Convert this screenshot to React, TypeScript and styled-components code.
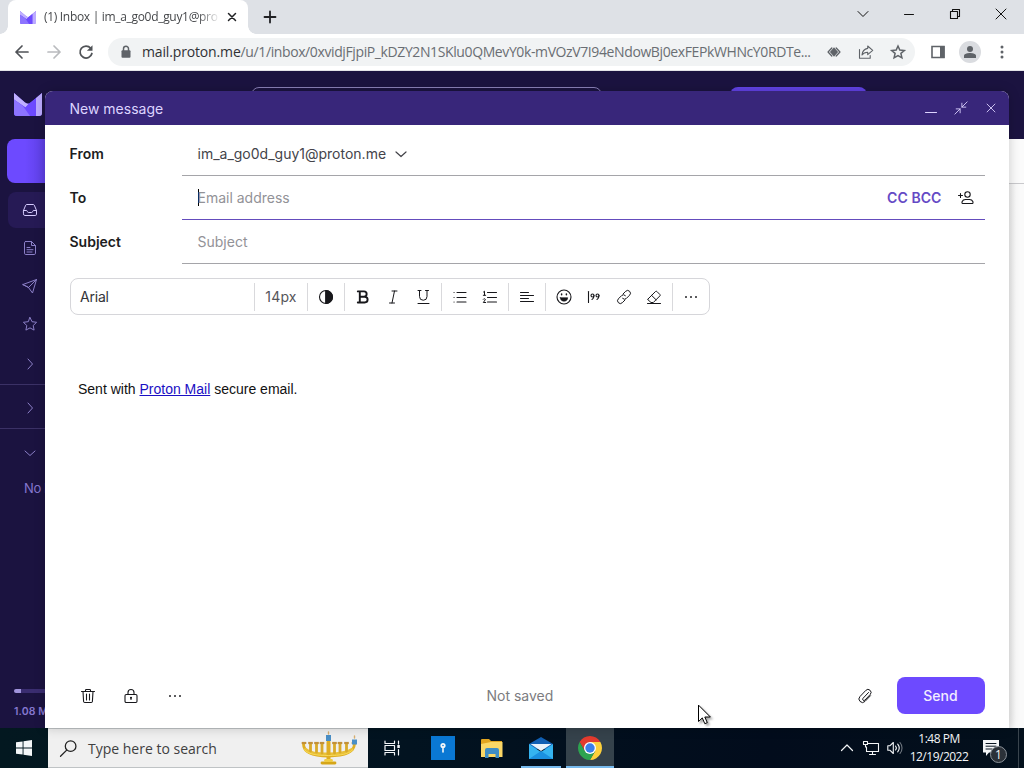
import React from 'react';
import styled, { createGlobalStyle } from 'styled-components';

const GlobalStyle = createGlobalStyle`
  *, *::before, *::after { box-sizing: border-box; }
  html, body { margin: 0; padding: 0; overflow: hidden; }
  body { font-family: Inter, "Liberation Sans", sans-serif; }
`;

const segoe = '"Open Sans", "Noto Sans", sans-serif';

const Screen = styled.div`
  position: relative;
  display: flex;
  flex-direction: column;
  width: 1024px;
  height: 768px;
  overflow: hidden;
  background: #fff;
`;

/* ---------- icon helper ---------- */

const Svg = styled.svg`
  display: block;
  flex: none;
  overflow: visible;
`;

type IconProps = {
  w?: number;
  h?: number;
  box?: string;
  sw?: number;
  color?: string;
  children: React.ReactNode;
};

const Icon = ({ w = 16, h, box = '0 0 16 16', sw = 1, color = 'currentColor', children }: IconProps) => (
  <Svg
    width={w}
    height={h ?? w}
    viewBox={box}
    fill="none"
    stroke={color}
    strokeWidth={sw}
    strokeLinecap="round"
    strokeLinejoin="round"
  >
    {children}
  </Svg>
);

/* ---------- browser chrome ---------- */

const TabStrip = styled.div`
  display: flex;
  flex: none;
  height: 34px;
  padding-left: 8px;
  background: #dee1e6;
  color: #202124;
`;

const Tab = styled.div`
  position: relative;
  display: flex;
  align-items: center;
  width: 240px;
  padding-left: 12px;
  background: #fff;
  border-radius: 8px 8px 0 0;
  &::before, &::after {
    content: '';
    position: absolute;
    bottom: 0;
    width: 8px;
    height: 8px;
  }
  &::before { left: -8px; background: radial-gradient(circle at 0 0, transparent 7.5px, #fff 8px); }
  &::after { right: -8px; background: radial-gradient(circle at 100% 0, transparent 7.5px, #fff 8px); }
`;

const TabTitle = styled.span`
  width: 174px;
  margin-left: 8px;
  white-space: nowrap;
  font: 12px/18px ${segoe};
  letter-spacing: -0.31px;
  color: #45474a;
  mask-image: linear-gradient(90deg, #000 154px, transparent 176px);
`;

const Cell = styled.div<{ $w: number; $color?: string }>`
  display: flex;
  flex: none;
  align-items: center;
  justify-content: center;
  width: ${p => p.$w}px;
  color: ${p => p.$color ?? 'inherit'};
`;

const Spacer = styled.div`
  flex: 1;
`;

const WindowButtons = styled.div`
  display: flex;
  height: 28px;
  color: #111;
`;

const AddressRow = styled.div`
  display: flex;
  flex: none;
  align-items: center;
  height: 37px;
  padding: 0 6px;
  background: #fff;
  border-bottom: 1px solid #e3e3e8;
  color: #5f6368;
`;

const Omnibox = styled.div`
  display: flex;
  align-items: center;
  width: 807px;
  height: 28px;
  margin: 0 7px 0 6px;
  padding: 0 1px 0 10px;
  border-radius: 14px;
  background: #f1f3f4;
`;

const Url = styled.span`
  width: 676px;
  margin-left: 8px;
  white-space: nowrap;
  font: 14px/20px ${segoe};
  letter-spacing: -0.39px;
  color: #6a6e73;
`;

const Host = styled.span`
  letter-spacing: -0.15px;
  color: #303134;
`;

const Avatar = styled.div`
  display: flex;
  align-items: center;
  justify-content: center;
  width: 22px;
  height: 22px;
  border-radius: 50%;
  background: #dadce0;
`;

/* ---------- mail application behind the composer ---------- */

const MailApp = styled.div`
  position: relative;
  display: flex;
  height: 657px;
  flex: none;
  background: #1b1340;
`;

const Sidebar = styled.aside`
  display: flex;
  flex-direction: column;
  width: 60px;
  padding: 22px 0 7px;
  color: #8b7fc7;
`;

const LogoSlot = styled.div`
  height: 46px;
  padding-left: 14px;
`;

const NewMessage = styled.div`
  height: 44px;
  margin: 0 0 9px 7px;
  border-radius: 8px;
  background: linear-gradient(90deg, #6d4aff 18px, #5a3ddd 44px);
`;

const NavItem = styled.div<{ $active?: boolean; $h?: number; $line?: boolean; $top?: number }>`
  display: flex;
  flex: none;
  align-items: center;
  height: ${p => p.$h ?? 38}px;
  margin-left: ${p => (p.$line ? 0 : 8)}px;
  padding-top: ${p => p.$top ?? 0}px;
  padding-left: ${p => (p.$line ? 22 : 14)}px;
  border-radius: ${p => (p.$line ? 0 : '8px')};
  background: ${p => (p.$active ? '#261a55' : 'transparent')};
  color: ${p => (p.$active ? '#d6ccff' : 'inherit')};
  border-bottom: ${p => (p.$line ? '1px solid #3b3166' : 'none')};
`;

const SideNote = styled.div<{ $size: number; $pad: number; $bold?: boolean }>`
  padding-left: ${p => p.$pad}px;
  white-space: nowrap;
  font-size: ${p => p.$size}px;
  line-height: 18px;
  font-weight: ${p => (p.$bold ? 600 : 400)};
  letter-spacing: ${p => (p.$bold ? 0.1 : -0.35)}px;
  color: #8577cf;
`;

const Storage = styled.div`
  height: 4px;
  margin: 0 0 10px 14px;
  border-radius: 2px;
  background: linear-gradient(90deg, #a094dc 7px, #3a2d70 7px);
`;

const Main = styled.main`
  display: flex;
  flex: 1;
  flex-direction: column;
`;

const AppHeader = styled.div`
  display: flex;
  height: 68px;
  padding: 16px 0 0 191px;
`;

const SearchField = styled.div`
  width: 351px;
  height: 36px;
  border: 1px solid #8a80b8;
  border-radius: 8px;
`;

const Upgrade = styled.div`
  width: 137px;
  height: 36px;
  margin-left: 128px;
  border-radius: 8px;
  background: #6243e6;
`;

const ListToolbar = styled.div`
  height: 45px;
  background: #fbfbfb;
  border-bottom: 1px solid #c9c9cc;
`;

const ListArea = styled.div`
  flex: 1;
  background: linear-gradient(90deg, #f0f0f0 950px, #fafafa 956px);
`;

/* ---------- composer ---------- */

const Composer = styled.section`
  position: absolute;
  left: 45px;
  top: 20px;
  display: flex;
  flex-direction: column;
  width: 964px;
  height: 637px;
  border-radius: 8px 8px 0 0;
  background: #fff;
  box-shadow: 0 0 12px rgba(0, 0, 0, 0.2);
  overflow: hidden;
`;

const ComposerHeader = styled.header`
  display: flex;
  flex: none;
  align-items: center;
  height: 34px;
  padding: 0 3px 0 24.5px;
  background: #38267a;
  color: #ddd4ff;
  font-size: 14px;
`;

const Fields = styled.div`
  padding: 7px 24px 0;
`;

const FieldRow = styled.div`
  display: flex;
  height: 44px;
  line-height: 44px;
  font-size: 14px;
`;

const FieldLabel = styled.label`
  width: 113px;
  padding-left: 0.5px;
  font-weight: 600;
  color: #1d1d22;
`;

const FieldBox = styled.div<{ $focus?: boolean; $muted?: boolean }>`
  display: flex;
  flex: 1;
  align-items: center;
  padding-left: 15.5px;
  border-bottom: 1px solid ${p => (p.$focus ? '#644cbd' : '#a5a5a9')};
  color: ${p => (p.$muted ? '#929297' : '#44444a')};
`;

const FromAddress = styled.span`
  margin-right: 7px;
`;

const FieldEnd = styled.span`
  width: 6px;
`;

const Caret = styled.span`
  width: 1px;
  height: 17px;
  margin: 0 -1.5px 0 0.5px;
  background: #000;
`;

const CopyLinks = styled.span`
  margin-right: 11.5px;
  font-weight: 600;
  letter-spacing: 0.06px;
  color: #6449c5;
`;

const FormatBar = styled.div`
  display: flex;
  flex: none;
  align-items: center;
  width: 640px;
  height: 37px;
  margin: 14px 0 0 25px;
  border: 1px solid #d6d6da;
  border-radius: 8px;
  color: #17171b;
  font-size: 14px;
`;

const FormatGroup = styled.div<{ $w: number; $last?: boolean }>`
  display: flex;
  flex: none;
  align-items: center;
  justify-content: center;
  width: ${p => p.$w}px;
  height: 28px;
  border-right: ${p => (p.$last ? 'none' : '1px solid #d9d9dc')};
`;

const FontName = styled.span`
  flex: 1;
  padding-left: 9px;
  letter-spacing: -0.2px;
  color: #333338;
`;

const FontSize = styled.span`
  letter-spacing: 0.2px;
  color: #55555a;
`;

const Body = styled.div`
  flex: 1;
  padding: 66px 33px 0;
  font: 14px/17px "Liberation Sans", Arial, sans-serif;
  color: #111;
  a { color: #1a0fc4; text-decoration: underline; }
`;

const ComposerFooter = styled.footer`
  display: flex;
  flex: none;
  align-items: center;
  height: 65px;
  padding: 0 24px 0 21px;
  color: #17171b;
`;

const SaveState = styled.span`
  flex: 1;
  padding-left: 289.5px;
  font-size: 14px;
  color: #7c7c80;
`;

const SendButton = styled.button`
  width: 88px;
  height: 37px;
  margin-left: 10px;
  padding: 0 1px 0 0;
  border: 0;
  border-radius: 8px;
  background: #6d4aff;
  color: #f2edff;
  font: 500 14px Inter, sans-serif;
`;

/* ---------- taskbar ---------- */

const Taskbar = styled.div`
  display: flex;
  flex: none;
  height: 40px;
  background: linear-gradient(90deg, #031820, #021320 40%, #020c1c 75%, #03101c);
  color: #f4f6f8;
`;

const SearchBox = styled.div`
  display: flex;
  align-items: center;
  width: 320px;
  padding: 0 11px 0 12px;
  border: 1px solid #bfc3c5;
  border-width: 1px 0;
  background: #f0f0f0;
  color: #222;
  font: 14px/20px ${segoe};
`;

const SearchText = styled.span`
  flex: 1;
  padding: 1px 0 0 11px;
  white-space: nowrap;
  color: #404040;
`;

const TaskCell = styled.div<{ $w: number; $state?: 'open' | 'active' }>`
  display: flex;
  flex: none;
  align-items: center;
  justify-content: center;
  width: ${p => p.$w}px;
  background: ${p => (p.$state === 'active' ? '#35424b' : 'transparent')};
  box-shadow: ${p => (p.$state ? 'inset 0 -2px #76b9ed' : 'none')};
`;

const TaskGap = styled.div<{ $w: number }>`
  width: ${p => p.$w}px;
  flex: none;
`;

const Clock = styled.div`
  display: flex;
  flex-direction: column;
  align-items: center;
  width: 66px;
  padding-top: 2px;
  white-space: nowrap;
  font: 12px/18px ${segoe};
  letter-spacing: -0.5px;
`;

const Notice = styled.div`
  position: relative;
  display: flex;
  align-items: center;
  width: 47px;
  padding-left: 11px;
  border-right: 1px solid #39444d;
`;

const NoticeBadge = styled.span`
  position: absolute;
  left: 18px;
  top: 18px;
  width: 17px;
  height: 17px;
  border: 1px solid #8b9299;
  border-radius: 50%;
  background: #2b3138;
  text-align: center;
  font: 12px/15px ${segoe};
`;

const Pointer = styled.div`
  position: absolute;
  left: 698px;
  top: 705px;
  filter: drop-shadow(2px 2px 1px rgba(0, 0, 0, 0.35));
`;

/* ---------- drawings ---------- */

const ProtonLogo = ({ w, h }: { w: number; h: number }) => (
  <Svg width={w} height={h} viewBox="0 0 28 23" preserveAspectRatio="none">
    <path d="M0 0l11 9.500a4.500 4.500 0 0 0 6 0L28 0v20a3 3 0 0 1-3 3H3a3 3 0 0 1-3-3z" fill="#7654fa" />
    <path d="M0 0l11 9.500a4.500 4.500 0 0 0 4 1l-3.500 4L0 7z" fill="#c0b0ff" />
    <path d="M0 6.500l11.500 8 3.500-4 7-5.500v18H3a3 3 0 0 1-3-3z" fill="#6d4aff" />
    <path d="M0 6.500l9 6.500 7 10H3a3 3 0 0 1-3-3z" fill="#8d74ff" />
    <path d="M22 5l6-5v20a3 3 0 0 1-3 3h-3z" fill="#bcabff" />
  </Svg>
);

const Chevron = ({ down = false, sw = 1 }: { down?: boolean; sw?: number }) => (
  <Icon sw={sw}>{down ? <path d="M3 6l5 4.500L13 6" /> : <path d="M6 3l4.500 5L6 13" />}</Icon>
);

const Dots = () => (
  <Icon>
    <g fill="currentColor" stroke="none">
      <circle cx="3" cy="8" r="0.950" />
      <circle cx="8" cy="8" r="0.950" />
      <circle cx="13" cy="8" r="0.950" />
    </g>
  </Icon>
);

const MENORAH_ARMS = [3, 9.5, 15.5, 21, 33.5, 39, 45.5, 53];

const Menorah = () => (
  <Icon w={56} h={36} box="0 0 56 36" sw={2.8} color="#dfae22">
    <path d="M2.500 14c0 8 9 12 25 12S53 22 53.500 14" />
    <path d="M4.500 19.500c4 4 11 4.500 23 4.500s19-1 23.500-4.500" stroke="#e9c038" strokeWidth="3.200" />
    <path d="M9.500 14v7M15.500 14v8M21 14v9M33.500 14v9M39 14v8M45.500 14v7" stroke="#d9aa2a" />
    <path d="M27.500 12v18" strokeWidth="4" />
    <path d="M3.500 20c5 4.500 12 5.500 24 5.500S47 24.500 51.500 20" stroke="#f8dc5c" strokeWidth="0.900" />
    {MENORAH_ARMS.map(x => (
      <path key={x} d={`M${x - 1.2} 13h2.400`} stroke="#c29038" strokeWidth="2.200" strokeLinecap="square" />
    ))}
    <path d="M21 33h13" stroke="#d6a618" />
    <path d="M24.500 30.500h6" stroke="#f0cc42" />
    <path d="M27.500 5v6M53.500 9.500v5" stroke="#4a8fc6" strokeWidth="5" strokeLinecap="butt" />
    <path d="M27.500 2v2M53.500 6v2" stroke="#d8b070" strokeWidth="1.400" />
  </Icon>
);

const Browser = () => (
  <>
    <TabStrip>
      <Tab>
        <ProtonLogo w={16} h={13} />
        <TabTitle>(1) Inbox | im_a_go0d_guy1@pro</TabTitle>
        <Cell $w={27}>
          <Icon w={8} box="0 0 8 8" sw={1.5}><path d="M.5.500l7 7M7.500.500l-7 7" /></Icon>
        </Cell>
      </Tab>
      <Cell $w={44}>
        <Icon w={12} box="0 0 12 12" sw={1.8}><path d="M6 .5v11M.5 6h11" /></Icon>
      </Cell>
      <Spacer />
      <WindowButtons>
        <Cell $w={46}><Icon w={10} box="0 0 10 10"><path d="M0 2.500l5 5 5-5" /></Icon></Cell>
        <Cell $w={46}><Icon w={10} box="0 0 10 10"><path d="M.5 5.500h9" /></Icon></Cell>
        <Cell $w={46}>
          <Icon w={10} box="0 0 10 10" sw={1.1}><path d="M.5 2.500h7v7h-7zM2.500 2.500v-2h7v7h-2" /></Icon>
        </Cell>
        <Cell $w={46}><Icon w={10} box="0 0 10 10"><path d="M0 0l10 10M10 0L0 10" /></Icon></Cell>
      </WindowButtons>
    </TabStrip>
    <AddressRow>
      <Cell $w={32} $color="#505357"><Icon sw={1.7}><path d="M14 8H2M8 2L2 8l6 6" /></Icon></Cell>
      <Cell $w={32} $color="#b9bbbe"><Icon sw={1.7}><path d="M2 8h12M8 2l6 6-6 6" /></Icon></Cell>
      <Cell $w={32} $color="#505357">
        <Icon sw={1.8}>
          <path d="M12.700 4.200A6 6 0 1 0 13.900 9.500" />
          <path d="M14.500 1.200v5.600H8.900z" fill="currentColor" stroke="none" />
        </Icon>
      </Cell>
      <Omnibox>
        <Icon>
          <rect x="3.500" y="6.200" width="9" height="7.500" rx="1" fill="currentColor" stroke="none" />
          <path d="M5.500 6.500V4.700a2.500 2.500 0 0 1 5 0v1.800" strokeWidth="1.500" />
        </Icon>
        <Url><Host>mail.proton.me</Host>/u/1/inbox/0xvidjFjpiP_kDZY2N1SKlu0QMevY0k-mVOzV7I94eNdowBj0exFEPkWHNcY0RDTe...</Url>
        <Cell $w={32}>
          <Icon w={14}>
            <path d="M5.500 3.500L1.200 8l4.300 4.500M10.500 3.500L14.800 8l-4.300 4.500" strokeWidth="1.500" />
            <path d="M8 2.500L12.700 8 8 13.500 3.300 8z" fill="currentColor" stroke="none" />
          </Icon>
        </Cell>
        <Cell $w={32}>
          <Icon sw={1.1}>
            <path d="M1.500 5.500v8.700h10.700v-2.700" />
            <path d="M9.700 2l5 4.300-5 4.300V8.200C7 8.200 5.300 9 4 11c.3-3.200 2-6 5.700-6.600z" />
          </Icon>
        </Cell>
        <Cell $w={32}>
          <Icon sw={1.5}><path d="M8 2l1.800 4.100 4.500.4-3.400 2.900 1 4.400L8 11.500l-3.900 2.300 1-4.400-3.400-2.900 4.500-.4z" strokeLinejoin="miter" /></Icon>
        </Cell>
      </Omnibox>
      <Cell $w={32}>
        <Icon w={14} box="0 0 14 14" sw={1.6}>
          <path d="M1 1.500h12v11H1z" strokeLinejoin="miter" />
          <path d="M9 1h4.500v12H9z" fill="currentColor" stroke="none" />
        </Icon>
      </Cell>
      <Cell $w={32}>
        <Avatar>
          <Icon w={12} box="0 0 12 12">
            <circle cx="6" cy="3" r="3" fill="currentColor" stroke="none" />
            <path d="M0 12V9.800C0 7.800 3.500 7 6 7s6 .8 6 2.800V12z" fill="currentColor" stroke="none" />
          </Icon>
        </Avatar>
      </Cell>
      <Cell $w={32}>
        <Icon>
          <g fill="currentColor" stroke="none">
            <circle cx="8" cy="3" r="1.500" /><circle cx="8" cy="8" r="1.500" /><circle cx="8" cy="13" r="1.500" />
          </g>
        </Icon>
      </Cell>
    </AddressRow>
  </>
);

const MailSidebar = () => (
  <Sidebar>
    <LogoSlot><ProtonLogo w={28} h={23} /></LogoSlot>
    <NewMessage />
    <NavItem $active $h={36}>
      <Icon>
        <path d="M1.500 8.500L3.700 3.200a1.200 1.200 0 0 1 1.100-.7h6.400a1.200 1.200 0 0 1 1.100.7l2.200 5.300v3.700a1.300 1.300 0 0 1-1.300 1.300H2.800a1.300 1.300 0 0 1-1.300-1.300z" />
        <path d="M1.500 8.500h3.200c.6 0 .6 2 1.600 2h3.400c1 0 1-2 1.600-2h3.200" />
      </Icon>
    </NavItem>
    <NavItem $h={40}>
      <Icon>
        <path d="M3.500 1.500h6l4 4v7.700a1.300 1.300 0 0 1-1.300 1.300H3.800a1.300 1.300 0 0 1-1.300-1.300V2.800a1.300 1.300 0 0 1 1-1.300zM9.500 1.500v4h4M5 7.500h3M5 9.700h6M5 12h5" />
      </Icon>
    </NavItem>
    <NavItem $h={36}>
      <Icon><path d="M1 6.500L14.500 1.500l-4 13.500-4-5.500zM6.500 9.500l8-8M6.500 9.500L1 6.500" /></Icon>
    </NavItem>
    <NavItem $h={40}>
      <Icon><path d="M8 1.500l2 4.200 4.600.6-3.400 3.200.9 4.600L8 11.900l-4.100 2.200.9-4.600L1.400 6.300 6 5.700z" /></Icon>
    </NavItem>
    <NavItem $h={41} $line><Chevron /></NavItem>
    <NavItem $h={44} $line $top={2}><Chevron /></NavItem>
    <NavItem $h={47}><Chevron down /></NavItem>
    <TaskGap $w={3} style={undefined} />
    <NoteSlot><SideNote $size={13} $pad={24}>No labels</SideNote></NoteSlot>
    <Spacer />
    <Storage />
    <SideNote $size={10.5} $pad={14} $bold>1.08 MB</SideNote>
  </Sidebar>
);

const NoteSlot = styled.div`
  padding-top: 3px;
`;

const FormattingToolbar = () => (
  <FormatBar>
    <FormatGroup $w={184}><FontName>Arial</FontName></FormatGroup>
    <FormatGroup $w={53}><FontSize>14px</FontSize></FormatGroup>
    <FormatGroup $w={37}>
      <Icon><circle cx="8" cy="8" r="6.500" strokeWidth="1.100" /><path d="M8 1.500a6.500 6.500 0 0 1 0 13z" fill="currentColor" /></Icon>
    </FormatGroup>
    <FormatGroup $w={97}>
      <Cell $w={30}>
        <Icon sw={1.9}><path d="M4.800 2.400v11M2.800 2.400h6.200a2.600 2.600 0 0 1 0 5.300H4.800h4.900a2.900 2.900 0 0 1 0 5.800H2.800" /></Icon>
      </Cell>
      <Cell $w={30}><Icon><path d="M7 2h5M4.500 14h5M9.500 2L7 14" /></Icon></Cell>
      <Cell $w={30}><Icon><path d="M3 1.500h3M10.500 1.500h3M4.500 1.500v6a3.750 3.750 0 0 0 7.500 0v-6M3 14.500h11" /></Icon></Cell>
    </FormatGroup>
    <FormatGroup $w={67}>
      <Cell $w={30}><Icon sw={1.1}><path d="M2 3.500h.1M2 8.500h.1M2 13h.1M5 3.500h9M5 8.500h9M5 13h9" /></Icon></Cell>
      <Cell $w={30}>
        <Icon>
          <path d="M5.500 3.500h9M5.500 8.500h9M5.500 13h9" strokeWidth="1.100" />
          <path d="M1.500 3l1-.8v4M1.300 6.300h2.400M1.300 10.200c.6-.9 2.200-.6 2 .5L1.300 13.500h2.400" />
        </Icon>
      </Cell>
    </FormatGroup>
    <FormatGroup $w={37}><Icon sw={1.1}><path d="M1.500 3.500h8M1.500 6.500h13M1.500 9.500h8M1.500 12.500h13" /></Icon></FormatGroup>
    <FormatGroup $w={127}>
      <Cell $w={29}>
        <Icon sw={1.1}>
          <circle cx="8" cy="8" r="7" />
          <path d="M4.300 8.700h7.400c0 4.700-7.400 4.700-7.400 0z" fill="currentColor" strokeWidth=".6" />
          <path d="M5.600 5v.8M10.400 5v.8" strokeWidth="1.500" />
        </Icon>
      </Cell>
      <Cell $w={31}>
        <Icon sw={1.1}>
          <path d="M2.500 2.500v11" />
          <circle cx="6.500" cy="6.500" r="1.500" /><path d="M8 6.500c0 2.200-.8 3.300-2 4" />
          <circle cx="11.500" cy="6.500" r="1.500" /><path d="M13 6.500c0 2.200-.8 3.300-2 4" />
        </Icon>
      </Cell>
      <Cell $w={30}>
        <Icon>
          <path d="M7 5l2.700-2.700a2.700 2.700 0 0 1 3.900 3.900L10.400 9.400a2.700 2.700 0 0 1-3.800 0M9 11l-2.700 2.700a2.700 2.700 0 0 1-3.900-3.900L5.600 6.600a2.700 2.700 0 0 1 3.800 0" />
        </Icon>
      </Cell>
      <Cell $w={30}>
        <Icon><path d="M2 10l7.500-7.500a1 1 0 0 1 1.400 0l3 3a1 1 0 0 1 0 1.400L7.300 13.500H5L2 10.800a.6.600 0 0 1 0-.8zM5.700 6.500l4.400 4.300M1.500 14.500h13" /></Icon>
      </Cell>
    </FormatGroup>
    <FormatGroup $w={36} $last><Dots /></FormatGroup>
  </FormatBar>
);

const ComposeWindow = () => (
  <Composer>
    <ComposerHeader>
      New message
      <Spacer />
      <Cell $w={30}><Icon sw={1.1}><path d="M2.500 12.500h11" /></Icon></Cell>
      <Cell $w={30}><Icon w={14}><path d="M1 15l6-6M2.500 9H7v4.500M15 1L9 7M9 2.500V7h4.500" /></Icon></Cell>
      <Cell $w={30}><Icon w={14}><path d="M3.500 3.500l9 9M12.500 3.500l-9 9" /></Icon></Cell>
    </ComposerHeader>
    <Fields>
      <FieldRow>
        <FieldLabel>From</FieldLabel>
        <FieldBox><FromAddress>im_a_go0d_guy1@proton.me</FromAddress><Chevron down sw={1.2} /></FieldBox>
      </FieldRow>
      <FieldRow>
        <FieldLabel>To</FieldLabel>
        <FieldBox $focus $muted>
          <Caret />Email address
          <Spacer />
          <CopyLinks>CC BCC</CopyLinks>
          <Cell $w={26} $color="#17171b">
            <Icon sw={1.1}>
              <path d="M.5 5.500h4M2.500 3.500v4" />
              <circle cx="9.500" cy="4.500" r="2.700" />
              <path d="M4.500 13.500c-1 0-.8-4 3-4h4c3.800 0 4 4 3 4z" />
            </Icon>
          </Cell>
          <FieldEnd />
        </FieldBox>
      </FieldRow>
      <FieldRow>
        <FieldLabel>Subject</FieldLabel>
        <FieldBox $muted>Subject</FieldBox>
      </FieldRow>
    </Fields>
    <FormattingToolbar />
    <Body>Sent with <a>Proton Mail</a> secure email.</Body>
    <ComposerFooter>
      <Cell $w={44}>
        <Icon sw={1.1}><path d="M1.500 3.500h13M5.500 3.500V2.300a.8.800 0 0 1 .8-.8h3.400a.8.800 0 0 1 .8.800v1.200M3 3.500l.6 10a1.200 1.200 0 0 0 1.200 1h6.400a1.200 1.200 0 0 0 1.200-1l.6-10M6.500 6v6M9.500 6v6" /></Icon>
      </Cell>
      <Cell $w={42}>
        <Icon sw={1.1}><rect x="2" y="6.500" width="12" height="8" rx="1.200" /><path d="M5 6.500v-2a3 3 0 0 1 6 0v2M8 9.500v2" /><circle cx="8" cy="9.800" r=".5" /></Icon>
      </Cell>
      <Cell $w={45}><Dots /></Cell>
      <SaveState>Not saved</SaveState>
      <Cell $w={44}>
        <Icon><path d="M11.500 4.500L6 10.300a1.300 1.300 0 0 0 1.900 1.800l5.300-5.600a3 3 0 0 0-4.400-4.100L3 8.500a3.500 3.500 0 0 0 5 4.900l5.500-5.700" /></Icon>
      </Cell>
      <SendButton>Send</SendButton>
    </ComposerFooter>
  </Composer>
);

const WindowsTaskbar = () => (
  <Taskbar>
    <TaskCell $w={48}>
      <Icon>
        <path d="M0 2.300l6.600-.9v6.100H0zM7.500 1.200L16 0v7.500H7.500zM0 8.400h6.600v6.200L0 13.700zM7.500 8.400H16V16l-8.500-1.200z" fill="currentColor" stroke="none" />
      </Icon>
    </TaskCell>
    <SearchBox>
      <Icon w={17} sw={1.2}><circle cx="10" cy="5.800" r="5" /><path d="M6.300 9.500L.5 15.300" /></Icon>
      <SearchText>Type here to search</SearchText>
      <Menorah />
    </SearchBox>
    <TaskCell $w={47}>
      <Icon sw={1.2}>
        <path d="M1 1v2.500h9.500V1M1 15v-2.500h9.500V15M1 5.500h9.500v5H1zM14.500 1v3M14.500 9.500V15" />
        <path d="M13.300 5h2.500v3h-2.500z" fill="currentColor" stroke="none" />
      </Icon>
    </TaskCell>
    <TaskCell $w={55}>
      <Icon w={24} box="0 0 24 24">
        <path d="M0 0h24v24H0z" fill="#0a78d4" stroke="none" />
        <circle cx="12" cy="9.500" r="1.700" strokeWidth="1.800" />
        <path d="M12 11.500v4.500" strokeWidth="1.600" />
      </Icon>
    </TaskCell>
    <TaskCell $w={43}>
      <Icon w={22} h={19} box="0 0 22 19">
        <g stroke="none">
          <path d="M0 1a1 1 0 0 1 1-1h7l2 2h11v16H0z" fill="#e3a51f" />
          <path d="M0 5l10-2h11.500v15H0z" fill="#fbd766" />
          <path d="M4 11a2 2 0 0 1 2-2h10a2 2 0 0 1 2 2v8h-3.500v-4h-7v4H4z" fill="#3f8dc4" />
        </g>
      </Icon>
    </TaskCell>
    <TaskGap $w={8} />
    <TaskCell $w={40} $state="open">
      <Icon w={24} h={22} box="0 0 24 22">
        <g stroke="none">
          <path d="M0 7L12 0l12 7v5H0z" fill="#1160b4" />
          <path d="M0 7l12 8L24 7v15H0z" fill="#35b4f0" />
          <path d="M0 22l12-8 12 8z" fill="#1b90df" />
          <path d="M1.500 7h21L12 14z" fill="#e9f3fb" />
        </g>
      </Icon>
    </TaskCell>
    <TaskGap $w={5} />
    <TaskCell $w={48} $state="active">
      <Icon w={24} box="0 0 24 24">
        <g stroke="none">
          <path d="M1.610 6A12 12 0 0 1 22.390 6H12L6.800 15z" fill="#e33b2e" />
          <path d="M22.390 6A12 12 0 0 1 12 24l5.200-9L12 6z" fill="#fdd03b" />
          <path d="M12 24A12 12 0 0 1 1.610 6l5.200 9h10.400z" fill="#2da350" />
          <circle cx="12" cy="12" r="6" fill="#fff" />
          <circle cx="12" cy="12" r="4.700" fill="#3c7fea" />
        </g>
      </Icon>
    </TaskCell>
    <Spacer />
    <TaskCell $w={24}><Icon w={12} box="0 0 12 12" sw={1.2}><path d="M.5 8.500L6 3l5.500 5.500" /></Icon></TaskCell>
    <TaskCell $w={24}>
      <Icon sw={1.1}>
        <path d="M4.500 3.500h11v8H3.500V7M9.500 11.500v3M6.500 14.500h6M.5 1.500h4v3h-4zM2.500 4.500V7h1" />
      </Icon>
    </TaskCell>
    <TaskCell $w={23}>
      <Icon sw={1.1}>
        <path d="M.8 5.800h2L6.300 2.500v11L2.800 10.200h-2zM8.500 6a3 3 0 0 1 0 4M10.700 4.200a6 6 0 0 1 0 7.600" />
        <path d="M13 2.500a8.500 8.500 0 0 1 0 11" opacity=".45" />
      </Icon>
    </TaskCell>
    <Clock><span>1:48 PM</span><span>12/19/2022</span></Clock>
    <Notice>
      <Icon>
        <path d="M0 0h16v12.500H6L3 16v-3.500H0z" fill="currentColor" stroke="none" />
        <path d="M3 3.500h10M3 6.200h10M3 9h6" stroke="#0a1622" />
      </Icon>
      <NoticeBadge>1</NoticeBadge>
    </Notice>
    <TaskGap $w={5} />
  </Taskbar>
);

export default function App() {
  return (
    <Screen>
      <GlobalStyle />
      <Browser />
      <MailApp>
        <MailSidebar />
        <Main>
          <AppHeader><SearchField /><Upgrade /></AppHeader>
          <ListToolbar />
          <ListArea />
        </Main>
        <ComposeWindow />
      </MailApp>
      <WindowsTaskbar />
      <Pointer>
        <Icon w={13} h={20} box="0 0 13 20">
          <path d="M.5.500v16l3.800-3.600 2.500 5.800 2.500-1.100-2.500-5.600h5.200z" fill="#fff" stroke="#000" />
        </Icon>
      </Pointer>
    </Screen>
  );
}
